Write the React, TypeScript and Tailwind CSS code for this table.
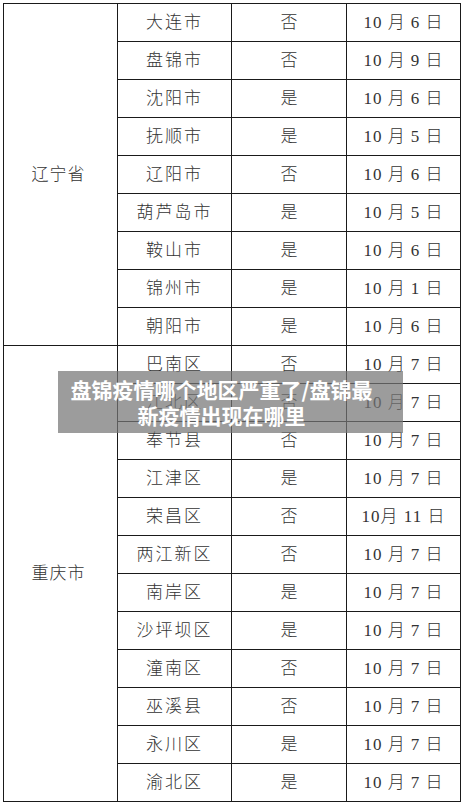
const liaoning: [string, string, string][] = [
  ["大连市", "否", "10 月 6 日"],
  ["盘锦市", "否", "10 月 9 日"],
  ["沈阳市", "是", "10 月 6 日"],
  ["抚顺市", "是", "10 月 5 日"],
  ["辽阳市", "否", "10 月 6 日"],
  ["葫芦岛市", "是", "10 月 5 日"],
  ["鞍山市", "是", "10 月 6 日"],
  ["锦州市", "是", "10 月 1 日"],
  ["朝阳市", "是", "10 月 6 日"],
]

const chongqing: [string, string, string][] = [
  ["巴南区", "否", "10 月 7 日"],
  ["江北区", "否", "10 月 7 日"],
  ["奉节县", "否", "10 月 7 日"],
  ["江津区", "是", "10 月 7 日"],
  ["荣昌区", "否", "10月 11 日"],
  ["两江新区", "否", "10 月 7 日"],
  ["南岸区", "是", "10 月 7 日"],
  ["沙坪坝区", "是", "10 月 7 日"],
  ["潼南区", "否", "10 月 7 日"],
  ["巫溪县", "否", "10 月 7 日"],
  ["永川区", "是", "10 月 7 日"],
  ["渝北区", "是", "10 月 7 日"],
]

const cell = "border border-[#1a1a1a] h-[38px] p-0 text-center align-middle"

function Block({ name, rows }: { name: string; rows: [string, string, string][] }) {
  return (
    <>
      {rows.map((r, i) => (
        <tr key={r[0]}>
          {i === 0 && (
            <td rowSpan={rows.length} className={cell + " tracking-[1px] pr-[4px]"}>
              {name}
            </td>
          )}
          <td className={cell + " tracking-[2px]"}>{r[0]}</td>
          <td className={cell}>{r[1]}</td>
          <td className={cell + " text-[17px] whitespace-pre tracking-[1px]"}>{r[2]}</td>
        </tr>
      ))}
    </>
  )
}

export default function App() {
  return (
    <div className="relative w-[464px] h-[806px] bg-white overflow-hidden pt-[3px] pl-[3px]">
      <table
        className="table-fixed border-collapse w-[457px] text-[17px] text-[#333] font-light"
        style={{ fontFamily: '"Liberation Serif", "Noto Sans CJK SC", serif' }}
      >
        <colgroup>
          <col className="w-[114px]" />
          <col className="w-[114px]" />
          <col className="w-[115px]" />
          <col className="w-[114px]" />
        </colgroup>
        <tbody>
          <Block name="辽宁省" rows={liaoning} />
          <Block name="重庆市" rows={chongqing} />
        </tbody>
      </table>

      {/* title banner over the table */}
      <div className="absolute left-[58px] top-[371px] w-[345px] h-[62px] bg-[rgba(118,118,118,0.72)] flex flex-col items-center justify-center pr-[18px]">
        <div
          className="text-white font-bold text-[21px] leading-[26px] text-center"
          style={{ fontFamily: '"Noto Sans CJK SC", sans-serif' }}
        >
          <div>盘锦疫情哪个地区严重了/盘锦最</div>
          <div>新疫情出现在哪里</div>
        </div>
      </div>
    </div>
  )
}
